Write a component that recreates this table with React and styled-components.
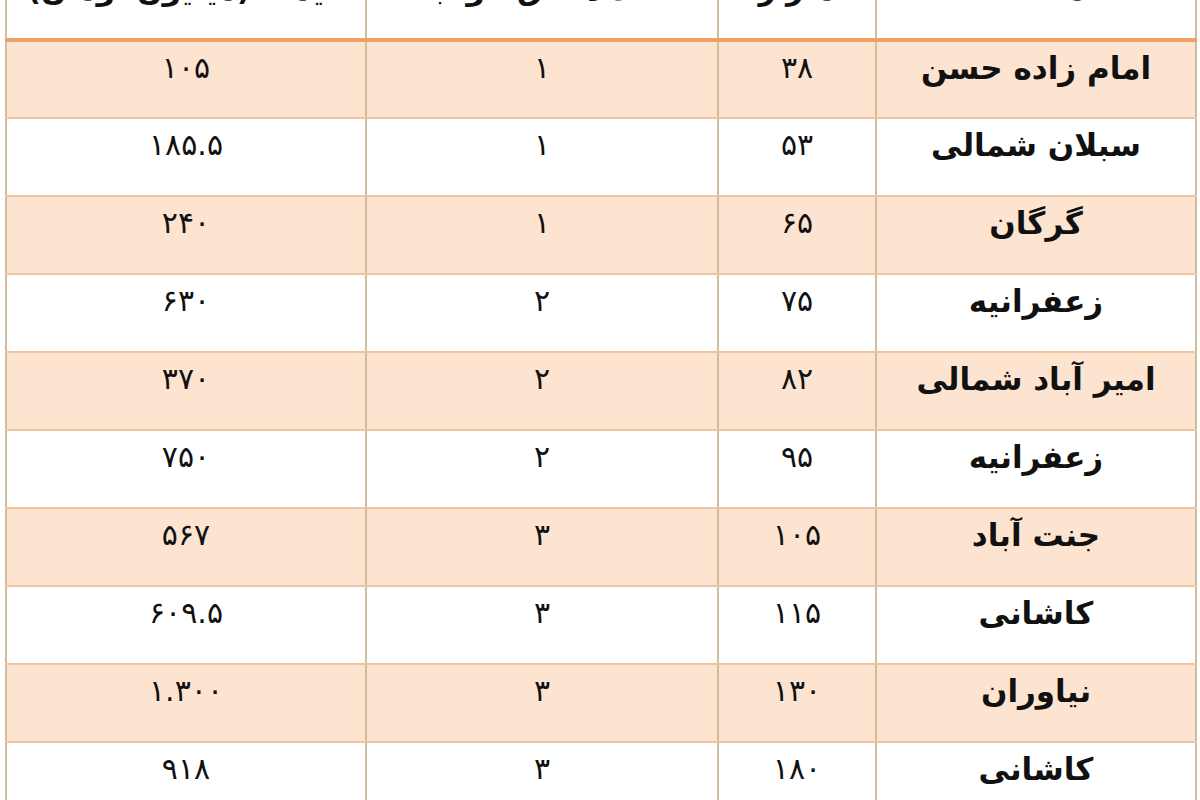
import React from 'react';
import styled, { createGlobalStyle } from 'styled-components';

const GlobalStyle = createGlobalStyle`
  html, body {
    margin: 0;
    padding: 0;
    background: #ffffff;
    overflow: hidden;
  }
  body {
    font-family: "DejaVu Sans", "Noto Sans", sans-serif;
  }
`;

const Page = styled.div`
  width: 1200px;
  height: 800px;
  overflow: hidden;
  padding: 0 5px;
  box-sizing: border-box;
`;

const Table = styled.table`
  direction: rtl;
  width: 1190px;
  margin-top: -36px;
  border-collapse: collapse;
  table-layout: fixed;
  color: #111111;
`;

const HeadCell = styled.th`
  height: 76px;
  padding: 0 0 30px 0;
  box-sizing: border-box;
  font-size: 30px;
  font-weight: bold;
  text-align: center;
  vertical-align: bottom;
  white-space: nowrap;
  overflow: hidden;
  line-height: 36px;
  background: #ffffff;
  border-left: 2px solid #d2bc9e;
  border-right: 2px solid #d2bc9e;
  border-bottom: 4px solid #eda167;
`;

const Row = styled.tr`
  background: ${(p) => (p.$shade ? '#fde4d1' : '#ffffff')};
`;

const Cell = styled.td`
  height: 78px;
  padding: 0 0 24px 0;
  box-sizing: border-box;
  text-align: center;
  vertical-align: middle;
  white-space: nowrap;
  line-height: 36px;
  font-size: ${(p) => (p.$name ? '31px' : '30px')};
  font-weight: ${(p) => (p.$name ? 'bold' : 'normal')};
  border-left: 2px solid #d2bc9e;
  border-right: 2px solid #d2bc9e;
  border-top: 2px solid #efc49e;
  border-bottom: 2px solid #efc49e;
`;

const rows = [
  ['امام زاده حسن', '۳۸', '۱', '۱۰۵'],
  ['سبلان شمالی', '۵۳', '۱', '۱۸۵.۵'],
  ['گرگان', '۶۵', '۱', '۲۴۰'],
  ['زعفرانیه', '۷۵', '۲', '۶۳۰'],
  ['امیر آباد شمالی', '۸۲', '۲', '۳۷۰'],
  ['زعفرانیه', '۹۵', '۲', '۷۵۰'],
  ['جنت آباد', '۱۰۵', '۳', '۵۶۷'],
  ['کاشانی', '۱۱۵', '۳', '۶۰۹.۵'],
  ['نیاوران', '۱۳۰', '۳', '۱.۳۰۰'],
  ['کاشانی', '۱۸۰', '۳', '۹۱۸'],
];

export default function App() {
  return (
    <Page>
      <GlobalStyle />
      <Table>
        <colgroup>
          <col style={{ width: 320 }} />
          <col style={{ width: 158 }} />
          <col style={{ width: 352 }} />
          <col style={{ width: 360 }} />
        </colgroup>
        <thead>
          <tr>
            <HeadCell>منطقه</HeadCell>
            <HeadCell>متراژ</HeadCell>
            <HeadCell>تعداد اتاق خواب</HeadCell>
            <HeadCell>قیمت (میلیون تومان)</HeadCell>
          </tr>
        </thead>
        <tbody>
          {rows.map((r, i) => (
            <Row key={i} $shade={i % 2 === 0}>
              <Cell $name>{r[0]}</Cell>
              <Cell>{r[1]}</Cell>
              <Cell>{r[2]}</Cell>
              <Cell>{r[3]}</Cell>
            </Row>
          ))}
        </tbody>
      </Table>
    </Page>
  );
}
